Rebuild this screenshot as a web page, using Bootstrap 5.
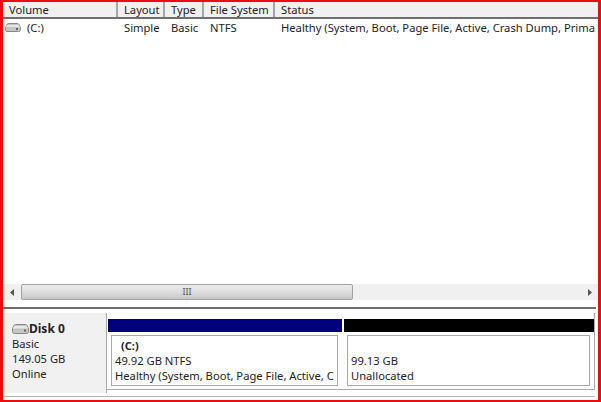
<!DOCTYPE html>
<html lang="en">
<head>
<meta charset="utf-8">
<title>Disk Management</title>
<link href="https://cdn.jsdelivr.net/npm/bootstrap@5.3.0/dist/css/bootstrap.min.css" rel="stylesheet">
<style>
html,body{margin:0;height:402px;overflow:hidden;background:#fff}
body{font-family:"Noto Sans","Open Sans",sans-serif;font-size:11.2px;line-height:15px;color:#222}
.frame{width:601px;height:402px;border:solid #ee0b0b;border-width:2px 3px 2px 3px;overflow:hidden}
.head{height:17px;background:#f0f0f0;border-bottom:2px solid #6f6f6f}
.hc{height:15px;padding-left:6px;border-right:2px solid #a6a6a6;line-height:16px;white-space:nowrap}
.w1{width:115px}.w2{width:47px}.w3{width:39px}.w4{width:71px}
.rowv{height:20px;padding-top:1px;white-space:nowrap}
.rowv>div{padding-left:6px;overflow:hidden}
.cv{width:115px;padding-left:2px!important;gap:6px}
.cv svg{margin-top:3px}
.st{flex:1 1 0}
.empty{height:245px}
.sb{height:16px;background:#f0f0f0}
.arrow{width:18px}
.thumb{width:332px;height:16px;border:1px solid #a2a2a2;border-radius:2px;background:linear-gradient(#ececec,#dcdcdc 50%,#c8c8c8)}
.grip{font-size:9px;line-height:14px;color:#555}
.gap1{height:7px;background:#fff}
.rule{height:2px;background:#6e6e6e;margin-right:2px}
.band{height:4px;background:#fff}
.diskwrap{height:80px;background:#fff}
.info{width:104px;height:80px;padding:8px 0 0 9px;background:#f1f1f1;border-right:1px solid #a9a9a9}
.dname{font-weight:700;font-size:12px}
.parts{width:488px;height:77px;padding-left:1px;background:#fff;border-right:1px solid #a9a9a9;border-bottom:1px solid #a9a9a9}
.p1{width:234px}
.p2{width:250px;margin-left:2px}
.cap1,.cap2{height:13px;margin-top:6px}
.cap1{background:#00007c}
.cap2{background:#000}
.body1,.body2{height:51px;margin-top:3px;border:1px solid #a9a9a9;background:#fff;white-space:nowrap;overflow:hidden}
.body1{width:227px;margin-left:3px;padding:2px 0 0 3px}
.body2{width:243px;margin-left:3px;padding:17px 0 0 3px}
.label{font-weight:700;padding-left:6px;font-size:11px}
.foot{margin-top:3px;background:#fff;border-top:1px solid #b5b5b5;margin-right:3px}
</style>
</head>
<body>
<div class="frame d-flex flex-column">
  <div class="head d-flex flex-shrink-0">
    <div class="hc w1">Volume</div>
    <div class="hc w2">Layout</div>
    <div class="hc w3">Type</div>
    <div class="hc w4">File System</div>
    <div class="hc flex-grow-1 border-0">Status</div>
  </div>
  <div class="rowv d-flex flex-shrink-0">
    <div class="cv d-flex align-items-start">
      <svg width="16" height="9" viewBox="0 0 16 9" aria-hidden="true"><path d="M3.500.5h9q1 0 1.500 1l1.500 3v2q0 2-2 2H2q-1.500 0-1.500-2v-2l1.500-3q.5-1 1.500-1z" fill="#c4c6c1" stroke="#85878a"/><path d="M2 2h12l1 2H1z" fill="#e6e7e4"/><rect x="11" y="5" width="2" height="2" fill="#5f6163"/></svg>
      <span>(C:)</span>
    </div>
    <div class="w2">Simple</div>
    <div class="w3">Basic</div>
    <div class="w4">NTFS</div>
    <div class="st">Healthy (System, Boot, Page File, Active, Crash Dump, Prima</div>
  </div>
  <div class="empty flex-shrink-0"></div>
  <div class="sb d-flex align-items-center flex-shrink-0">
    <div class="arrow d-flex justify-content-center"><svg width="5" height="7" viewBox="0 0 5 7" aria-hidden="true"><path d="M4 0v7L0 3.500z" fill="#555"/></svg></div>
    <div class="thumb d-flex justify-content-center grip">III</div>
    <div class="flex-grow-1"></div>
    <div class="arrow d-flex justify-content-center"><svg width="5" height="7" viewBox="0 0 5 7" aria-hidden="true"><path d="M1 0v7l4-3.500z" fill="#555"/></svg></div>
  </div>
  <div class="gap1 flex-shrink-0"></div>
  <div class="rule flex-shrink-0"></div>
  <div class="band flex-shrink-0"></div>
  <div class="diskwrap d-flex flex-shrink-0">
    <div class="info">
      <div class="d-flex align-items-center">
        <svg width="17" height="10" viewBox="0 0 17 10" aria-hidden="true"><path d="M3.500.5h10q1 0 1.500 1l1.500 3v3q0 2-2 2H2.500q-2 0-2-2v-3l1.500-3q.5-1 1.500-1z" fill="#c4c6c1" stroke="#85878a"/><path d="M2 2h13l1 2.500H1z" fill="#e6e7e4"/><rect x="12" y="5.500" width="2" height="2" fill="#5f6163"/></svg>
        <span class="dname">Disk 0</span>
      </div>
      <div>Basic</div>
      <div>149.05 GB</div>
      <div>Online</div>
    </div>
    <div class="parts d-flex">
      <div class="p1">
        <div class="cap1"></div>
        <div class="body1">
          <div class="label">(C:)</div>
          <div>49.92 GB NTFS</div>
          <div>Healthy (System, Boot, Page File, Active, C</div>
        </div>
      </div>
      <div class="p2">
        <div class="cap2"></div>
        <div class="body2">
          <div>99.13 GB</div>
          <div>Unallocated</div>
        </div>
      </div>
    </div>
  </div>
  <div class="foot flex-grow-1"></div>
</div>
<script src="https://cdn.jsdelivr.net/npm/bootstrap@5.3.0/dist/js/bootstrap.bundle.min.js"></script>
</body>
</html>
